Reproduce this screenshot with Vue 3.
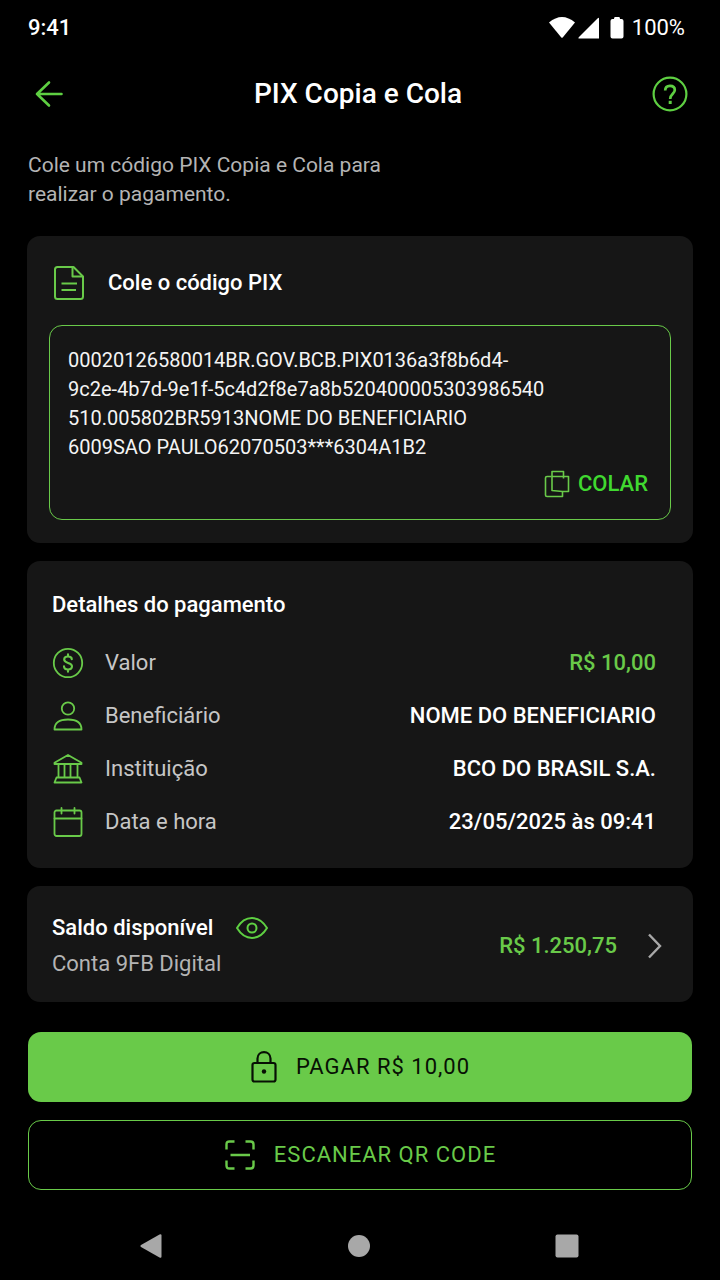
<script setup>
import { ref } from 'vue'

const code = ref(
  [
    '00020126580014BR.GOV.BCB.PIX0136a3f8b6d4-',
    '9c2e-4b7d-9e1f-5c4d2f8e7a8b520400005303986540',
    '510.005802BR5913NOME DO BENEFICIARIO',
    '6009SAO PAULO62070503***6304A1B2',
  ].join('\n')
)

const details = [
  { icon: 'money', label: 'Valor', value: 'R$ 10,00', accent: true },
  { icon: 'person', label: 'Beneficiário', value: 'NOME DO BENEFICIARIO' },
  { icon: 'bank', label: 'Instituição', value: 'BCO DO BRASIL S.A.' },
  { icon: 'calendar', label: 'Data e hora', value: '23/05/2025 às 09:41' },
]
</script>

<template>
  <div class="screen">
    <div class="status">
      <span class="clock">9:41</span>
      <div class="status-icons">
        <svg width="80" height="24" viewBox="0 0 80 24" fill="#fff" aria-hidden="true">
          <path d="M1 6.500Q14-4.500 27 6.500L14.700 21.500Q14 22.200 13.300 21.500Z" />
          <path d="M51 2.500V22.500H31.500Q29.500 22.500 31 21L49.500 2.500Q51 1 51 2.500Z" />
          <path d="M67 1h4q1 0 1 2h1.500q2 0 2 2v15.500q0 2-2 2h-9q-2 0-2-2V5q0-2 2-2H66q0-2 1-2Z" />
        </svg>
        <span>100%</span>
      </div>
    </div>

    <header class="header">
      <button class="icon-button" type="button" aria-label="Voltar">
        <svg width="42" height="36" viewBox="0 0 42 36" fill="none" stroke="currentColor" stroke-width="2.600" stroke-linecap="round" stroke-linejoin="round">
          <path d="M33.500 18H9M21 6.500L9 18L21 29.500" />
        </svg>
      </button>
      <h1>PIX Copia e Cola</h1>
      <button class="icon-button help" type="button" aria-label="Ajuda">
        <svg width="36" height="36" viewBox="0 0 36 36" fill="none" stroke="currentColor" stroke-width="2.200">
          <circle cx="18" cy="18" r="16.400" />
          <path d="M13.200 14.500C13.200 11.300 15 9.800 18 9.800C21 9.800 22.800 11.300 22.800 14C22.800 17.800 18.200 17.800 18.200 23" stroke-width="2.700" />
          <path d="M18.200 24.800V28" stroke-width="3" />
        </svg>
      </button>
    </header>

    <main>
      <p class="intro">Cole um código PIX Copia e Cola para realizar o pagamento.</p>

      <section class="card code-card">
        <div class="code-title">
          <svg width="32" height="36" viewBox="0 0 32 36" fill="none" stroke="currentColor" stroke-width="2" stroke-linejoin="round" aria-hidden="true">
            <path d="M4.500 2H20.500L30 11.500V31.500Q30 34 27.500 34H4.500Q2 34 2 31.500V4.500Q2 2 4.500 2Z" />
            <path d="M19.500 2V11.500H30M8.500 18.500H24M8.500 25H23" />
          </svg>
          <label for="pix-code">Cole o código PIX</label>
        </div>
        <div class="code-box">
          <textarea id="pix-code" v-model="code" rows="4" spellcheck="false"></textarea>
          <button class="paste" type="button">
            <svg width="26" height="28" viewBox="0 0 26 28" fill="none" stroke="#69ca49" stroke-width="1.600" stroke-linejoin="round" aria-hidden="true">
              <path d="M7.500 6.500H3Q1.500 6.500 1.500 8V25Q1.500 26.500 3 26.500H18.500V21.500" />
              <path d="M19.500 6.500V1.500H8V20.500L18.500 21.500H24.500V6.500H8M19.500 6.500V8.500" />
            </svg>
            <span>COLAR</span>
          </button>
        </div>
      </section>

      <section class="card details">
        <h2>Detalhes do pagamento</h2>
        <dl>
          <div v-for="item in details" :key="item.label" class="row">
            <dt>
              <svg width="32" height="32" viewBox="0 0 32 32" fill="none" stroke="currentColor" stroke-width="1.800" stroke-linejoin="round" stroke-linecap="round" aria-hidden="true">
                <template v-if="item.icon === 'money'">
                  <circle cx="16" cy="16" r="14.200" />
                  <path d="M19.800 12.200C19.800 10.300 18.300 9.500 16 9.500C13.600 9.500 12.200 10.700 12.200 12.600C12.200 17 20 14.800 20 19.300C20 21.300 18.500 22.500 16 22.500C13.500 22.500 12 21.400 12 19.300M16 7.300V9.500M16 22.500V24.700" stroke-width="2.100" />
                </template>
                <template v-else-if="item.icon === 'person'">
                  <circle cx="16" cy="8.500" r="6.200" />
                  <path d="M2.500 29.500C2.500 23 7 19.500 16 19.500C25 19.500 29.500 23 29.500 29.500Z" />
                </template>
                <template v-else-if="item.icon === 'bank'">
                  <path d="M16 2L29.500 9.800V11H2.500V9.800ZM6.500 11V24.500M12.500 11V24.500M18.500 11V24.500M25.500 11V24.500M4.500 24.500H27.500L29.500 29.500H2.500Z" />
                </template>
                <template v-else>
                  <rect x="2.500" y="4.500" width="27" height="25.500" rx="2" />
                  <path d="M2.500 12.500H29.500M9.500 2V7.500M22.500 2V7.500" />
                </template>
              </svg>
              <span>{{ item.label }}</span>
            </dt>
            <dd :class="{ accent: item.accent }">{{ item.value }}</dd>
          </div>
        </dl>
      </section>

      <section class="card balance">
        <div class="account">
          <div class="balance-title">
            <h2>Saldo disponível</h2>
            <button class="icon-button" type="button" aria-label="Ocultar saldo">
              <svg width="34" height="26" viewBox="0 0 34 26" fill="none" stroke="currentColor" stroke-width="2" stroke-linejoin="round">
                <path d="M2 13C10-.200 24-.200 32 13C24 26.200 10 26.200 2 13Z" />
                <circle cx="17" cy="13" r="4.500" />
              </svg>
            </button>
          </div>
          <p>Conta 9FB Digital</p>
        </div>
        <strong>R$ 1.250,75</strong>
        <button class="icon-button chevron" type="button" aria-label="Ver conta">
          <svg width="16" height="28" viewBox="0 0 16 28" fill="none" stroke="currentColor" stroke-width="2.400">
            <path d="M2 2.500L13 14L2 25.500" />
          </svg>
        </button>
      </section>

      <div class="actions">
        <button class="action primary" type="button">
          <svg width="28" height="34" viewBox="0 0 28 34" fill="none" stroke="currentColor" stroke-width="2.200" aria-hidden="true">
            <rect x="2.500" y="13" width="23" height="18.500" rx="2" />
            <path d="M7.500 13V8.500C7.500 0 20.500 0 20.500 8.500V13" />
            <circle cx="14" cy="21.500" r="2.200" fill="currentColor" stroke="none" />
          </svg>
          <span>PAGAR R$ 10,00</span>
        </button>
        <button class="action outline" type="button">
          <svg width="32" height="32" viewBox="0 0 32 32" fill="none" stroke="currentColor" stroke-width="2.400" aria-hidden="true">
            <path d="M2.500 10.500V5.500Q2.500 2.500 5.500 2.500H10.500M21.500 2.500H26.500Q29.500 2.500 29.500 5.500V10.500M29.500 21.500V26.500Q29.500 29.500 26.500 29.500H21.500M10.500 29.500H5.500Q2.500 29.500 2.500 26.500V21.500M6.500 16H26" />
          </svg>
          <span>ESCANEAR QR CODE</span>
        </button>
      </div>
    </main>

    <nav class="system-nav" aria-label="Sistema">
      <button type="button" aria-label="Anterior">
        <svg width="24" height="26" viewBox="0 0 24 26"><path d="M2 12L20.500 1.500Q22.500.500 22.500 2.500V23.500Q22.500 25.500 20.500 24.500L2 14Q.500 13 2 12Z" /></svg>
      </button>
      <button type="button" aria-label="Início">
        <svg width="24" height="24" viewBox="0 0 24 24"><circle cx="12" cy="12" r="11" /></svg>
      </button>
      <button type="button" aria-label="Recentes">
        <svg width="24" height="24" viewBox="0 0 24 24"><rect x="0.500" y="0.500" width="23" height="23" rx="2" /></svg>
      </button>
    </nav>
  </div>
</template>

<style>
body {
  background: #000;
}
</style>

<style scoped>
.screen {
  --green: #69ca49;
  min-height: 100vh;
  box-sizing: border-box;
  display: flex;
  flex-direction: column;
  background: #000;
  color: #fff;
  font-family: Roboto, "Liberation Sans", sans-serif;
  font-size: 22px;
  line-height: 28px;
}

h1, h2, p, dl, dd {
  margin: 0;
}

button {
  margin: 0;
  padding: 0;
  border: 0;
  background: none;
  color: var(--green);
  font: inherit;
  cursor: pointer;
}

svg {
  display: block;
  flex: none;
}

.status {
  display: flex;
  align-items: center;
  justify-content: space-between;
  height: 56px;
  padding: 0 35px 0 28px;
}

.clock {
  font-weight: 500;
}

.status-icons {
  display: flex;
  align-items: center;
  gap: 4px;
}

.header {
  display: grid;
  grid-template-columns: 1fr auto 1fr;
  align-items: center;
  height: 76px;
  padding: 0 32px 0 28px;
}

.icon-button {
  justify-self: start;
  color: #5ecf42;
}

.help {
  justify-self: end;
}

h1 {
  font-size: 28px;
  line-height: 36px;
  font-weight: 500;
}

main {
  padding: 0 27px;
}

.intro {
  max-width: 380px;
  padding: 19px 1px 27px;
  color: #b4b4b4;
  font-size: 21px;
  line-height: 29px;
}

.card {
  border-radius: 13px;
  background: #161616;
  margin-bottom: 18px;
}

.code-card {
  padding: 24px 22px 23px;
}

.code-title {
  display: flex;
  align-items: center;
  gap: 23px;
  height: 46px;
  padding-left: 4px;
  margin-bottom: 19px;
  color: var(--green);
}

.code-title label {
  color: #fff;
  font-weight: 500;
}

.code-box {
  display: flex;
  flex-direction: column;
  padding: 20px 22px 13px 18px;
  border: 1px solid var(--green);
  border-radius: 13px;
}

textarea {
  display: block;
  width: 100%;
  height: 116px;
  box-sizing: border-box;
  padding: 0;
  border: 0;
  outline: 0;
  resize: none;
  overflow: hidden;
  background: transparent;
  color: #f4f4f4;
  font: inherit;
  font-size: 20px;
  line-height: 29px;
}

.paste {
  display: flex;
  align-items: center;
  align-self: flex-end;
  gap: 8px;
  height: 44px;
  color: #40d930;
  font-weight: 500;
}

h2 {
  font-size: 22px;
  line-height: 28px;
  font-weight: 500;
}

.details {
  padding: 30px 37px 20px 25px;
}

dl {
  padding-top: 17px;
}

.row {
  display: flex;
  align-items: center;
  justify-content: space-between;
  height: 53px;
}

dt {
  display: flex;
  align-items: center;
  gap: 21px;
  color: var(--green);
}

dt span {
  color: #c6c6c6;
}

dd {
  font-weight: 500;
}

.accent {
  color: var(--green);
}

.balance {
  display: flex;
  align-items: center;
  padding: 24px 30px 20px 25px;
}

.account {
  flex: 1;
}

.balance-title {
  display: flex;
  align-items: center;
  gap: 22px;
  height: 36px;
}

.account p {
  color: #b4b4b4;
  line-height: 36px;
}

.balance strong {
  color: var(--green);
  font-weight: 500;
}

.chevron {
  margin-left: 30px;
  color: #a8a8a8;
}

.actions {
  display: flex;
  flex-direction: column;
  gap: 18px;
  padding: 12px 1px 0;
}

.action {
  display: flex;
  align-items: center;
  justify-content: center;
  gap: 18px;
  height: 70px;
  border-radius: 13px;
  letter-spacing: 1px;
}

.primary {
  background: var(--green);
  color: #071004;
}

.outline {
  border: 1px solid var(--green);
}

.system-nav {
  display: flex;
  align-items: center;
  justify-content: space-between;
  height: 68px;
  margin-top: auto;
  padding: 0 141px 0 139px;
}

.system-nav svg {
  fill: #a8a8a8;
}
</style>
